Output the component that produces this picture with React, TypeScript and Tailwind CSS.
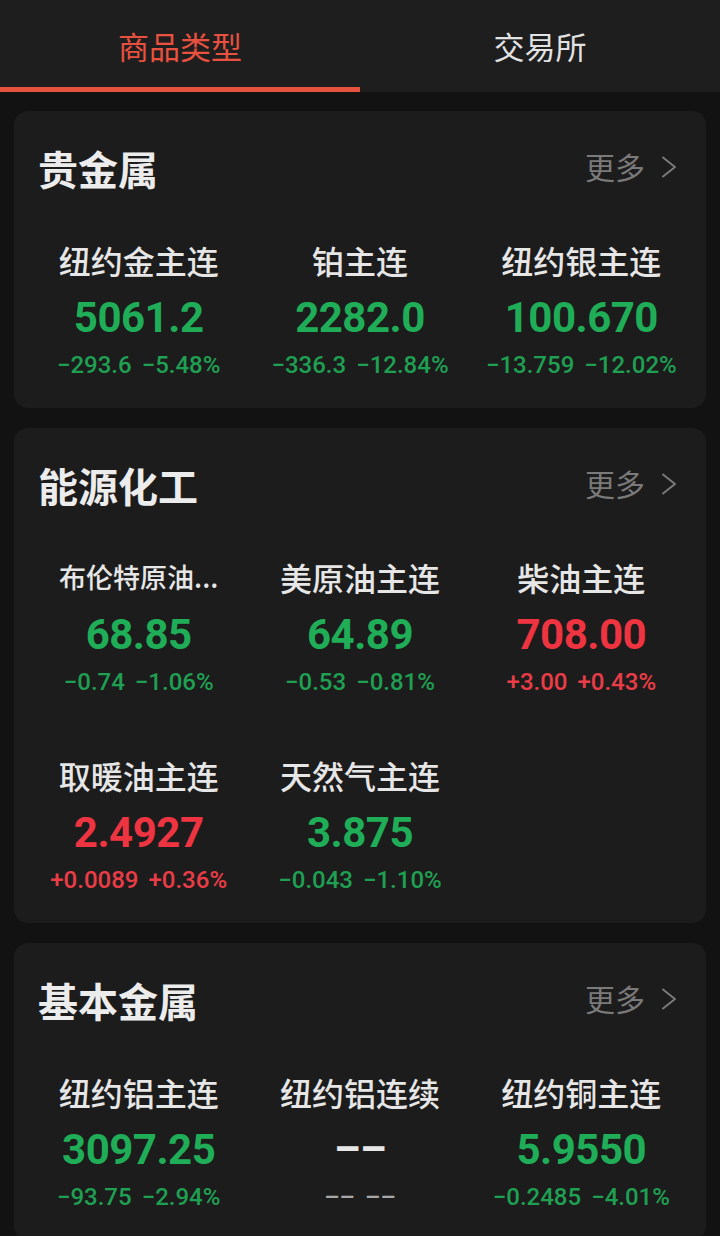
import { ReactNode } from "react";

type Quote = {
  name: string;
  price: string;
  change: string;
  pct: string;
  dir: "up" | "down" | "none";
  small?: boolean;
};

type Section = {
  title: string;
  quotes: Quote[];
};

const sections: Section[] = [
  {
    title: "贵金属",
    quotes: [
      { name: "纽约金主连", price: "5061.2", change: "−293.6", pct: "−5.48%", dir: "down" },
      { name: "铂主连", price: "2282.0", change: "−336.3", pct: "−12.84%", dir: "down" },
      { name: "纽约银主连", price: "100.670", change: "−13.759", pct: "−12.02%", dir: "down" },
    ],
  },
  {
    title: "能源化工",
    quotes: [
      { name: "布伦特原油...", price: "68.85", change: "−0.74", pct: "−1.06%", dir: "down", small: true },
      { name: "美原油主连", price: "64.89", change: "−0.53", pct: "−0.81%", dir: "down" },
      { name: "柴油主连", price: "708.00", change: "+3.00", pct: "+0.43%", dir: "up" },
      { name: "取暖油主连", price: "2.4927", change: "+0.0089", pct: "+0.36%", dir: "up" },
      { name: "天然气主连", price: "3.875", change: "−0.043", pct: "−1.10%", dir: "down" },
    ],
  },
  {
    title: "基本金属",
    quotes: [
      { name: "纽约铝主连", price: "3097.25", change: "−93.75", pct: "−2.94%", dir: "down" },
      { name: "纽约铝连续", price: "––", change: "––", pct: "––", dir: "none" },
      { name: "纽约铜主连", price: "5.9550", change: "−0.2485", pct: "−4.01%", dir: "down" },
    ],
  },
];

const cjk = "font-['Noto_Sans_CJK_SC','Noto_Sans',sans-serif]";
const num = "font-['Roboto','Noto_Sans',sans-serif]";

function ChevronRight() {
  return (
    <svg width="18" height="22" viewBox="0 0 18 22" fill="none" className="mt-[2px]">
      <path d="M3 1.5 L15 11 L3 20.5" stroke="#7a7a7a" strokeWidth="2" strokeLinecap="round" strokeLinejoin="round" />
    </svg>
  );
}

function Tab({ label, active }: { label: string; active?: boolean }) {
  return (
    <div className="flex-1 flex flex-col">
      <div
        className={`h-[87px] pt-[6px] flex items-center justify-center text-[31px] ${cjk} ${
          active ? "text-[#e8503f]" : "text-[#e2e2e2]"
        }`}
      >
        {label}
      </div>
      <div className={`h-[5px] ${active ? "bg-[#e5533f]" : ""}`} />
    </div>
  );
}

function QuoteCell({ q }: { q: Quote }) {
  const priceColor =
    q.dir === "up" ? "text-[#ef3441]" : q.dir === "down" ? "text-[#20ad58]" : "text-[#e6e6e6]";
  const changeColor =
    q.dir === "up" ? "text-[#ea3c47]" : q.dir === "down" ? "text-[#1f9f52]" : "text-[#a8a8a8]";

  return (
    <div className="flex flex-col items-center">
      <div
        className={`h-[40px] leading-[40px] font-medium text-[#e6e6e6] whitespace-nowrap ${cjk} ${
          q.small ? "text-[27px]" : "text-[32px]"
        }`}
      >
        {q.name}
      </div>
      <div className={`mt-[12px] h-[52px] leading-[52px] text-[42px] font-bold tracking-[-0.5px] ${num} ${priceColor}`}>
        {q.price}
      </div>
      <div className={`mt-[6px] h-[30px] leading-[30px] text-[24px] font-medium flex gap-[10px] whitespace-nowrap ${num} ${changeColor}`}>
        <span>{q.change}</span>
        <span>{q.pct}</span>
      </div>
    </div>
  );
}

function Card({ title, children }: { title: string; children: ReactNode }) {
  return (
    <section className="mx-[14px] bg-[#1c1c1c] rounded-[14px] pt-[29px] pb-[28px] px-[14px]">
      <div className="h-[56px] flex items-center justify-between pl-[10px] pr-[14px]">
        <h2 className={`text-[40px] font-bold text-[#ececec] ${cjk}`}>{title}</h2>
        <div className={`flex items-center gap-[15px] -mt-[4px] text-[30px] text-[#7a7a7a] ${cjk}`}>
          <span>更多</span>
          <ChevronRight />
        </div>
      </div>
      <div className="mt-[44px] grid grid-cols-3 gap-y-[58px]">{children}</div>
    </section>
  );
}

export default function App() {
  return (
    <div className="w-[720px] h-[1236px] overflow-hidden bg-[#121212]">
      <header className="h-[92px] bg-[#1e1e1e] flex">
        <Tab label="商品类型" active />
        <Tab label="交易所" />
      </header>

      <main className="mt-[19px] flex flex-col gap-[20px]">
        {sections.map((s) => (
          <Card key={s.title} title={s.title}>
            {s.quotes.map((q) => (
              <QuoteCell key={q.name} q={q} />
            ))}
          </Card>
        ))}
      </main>
    </div>
  );
}
